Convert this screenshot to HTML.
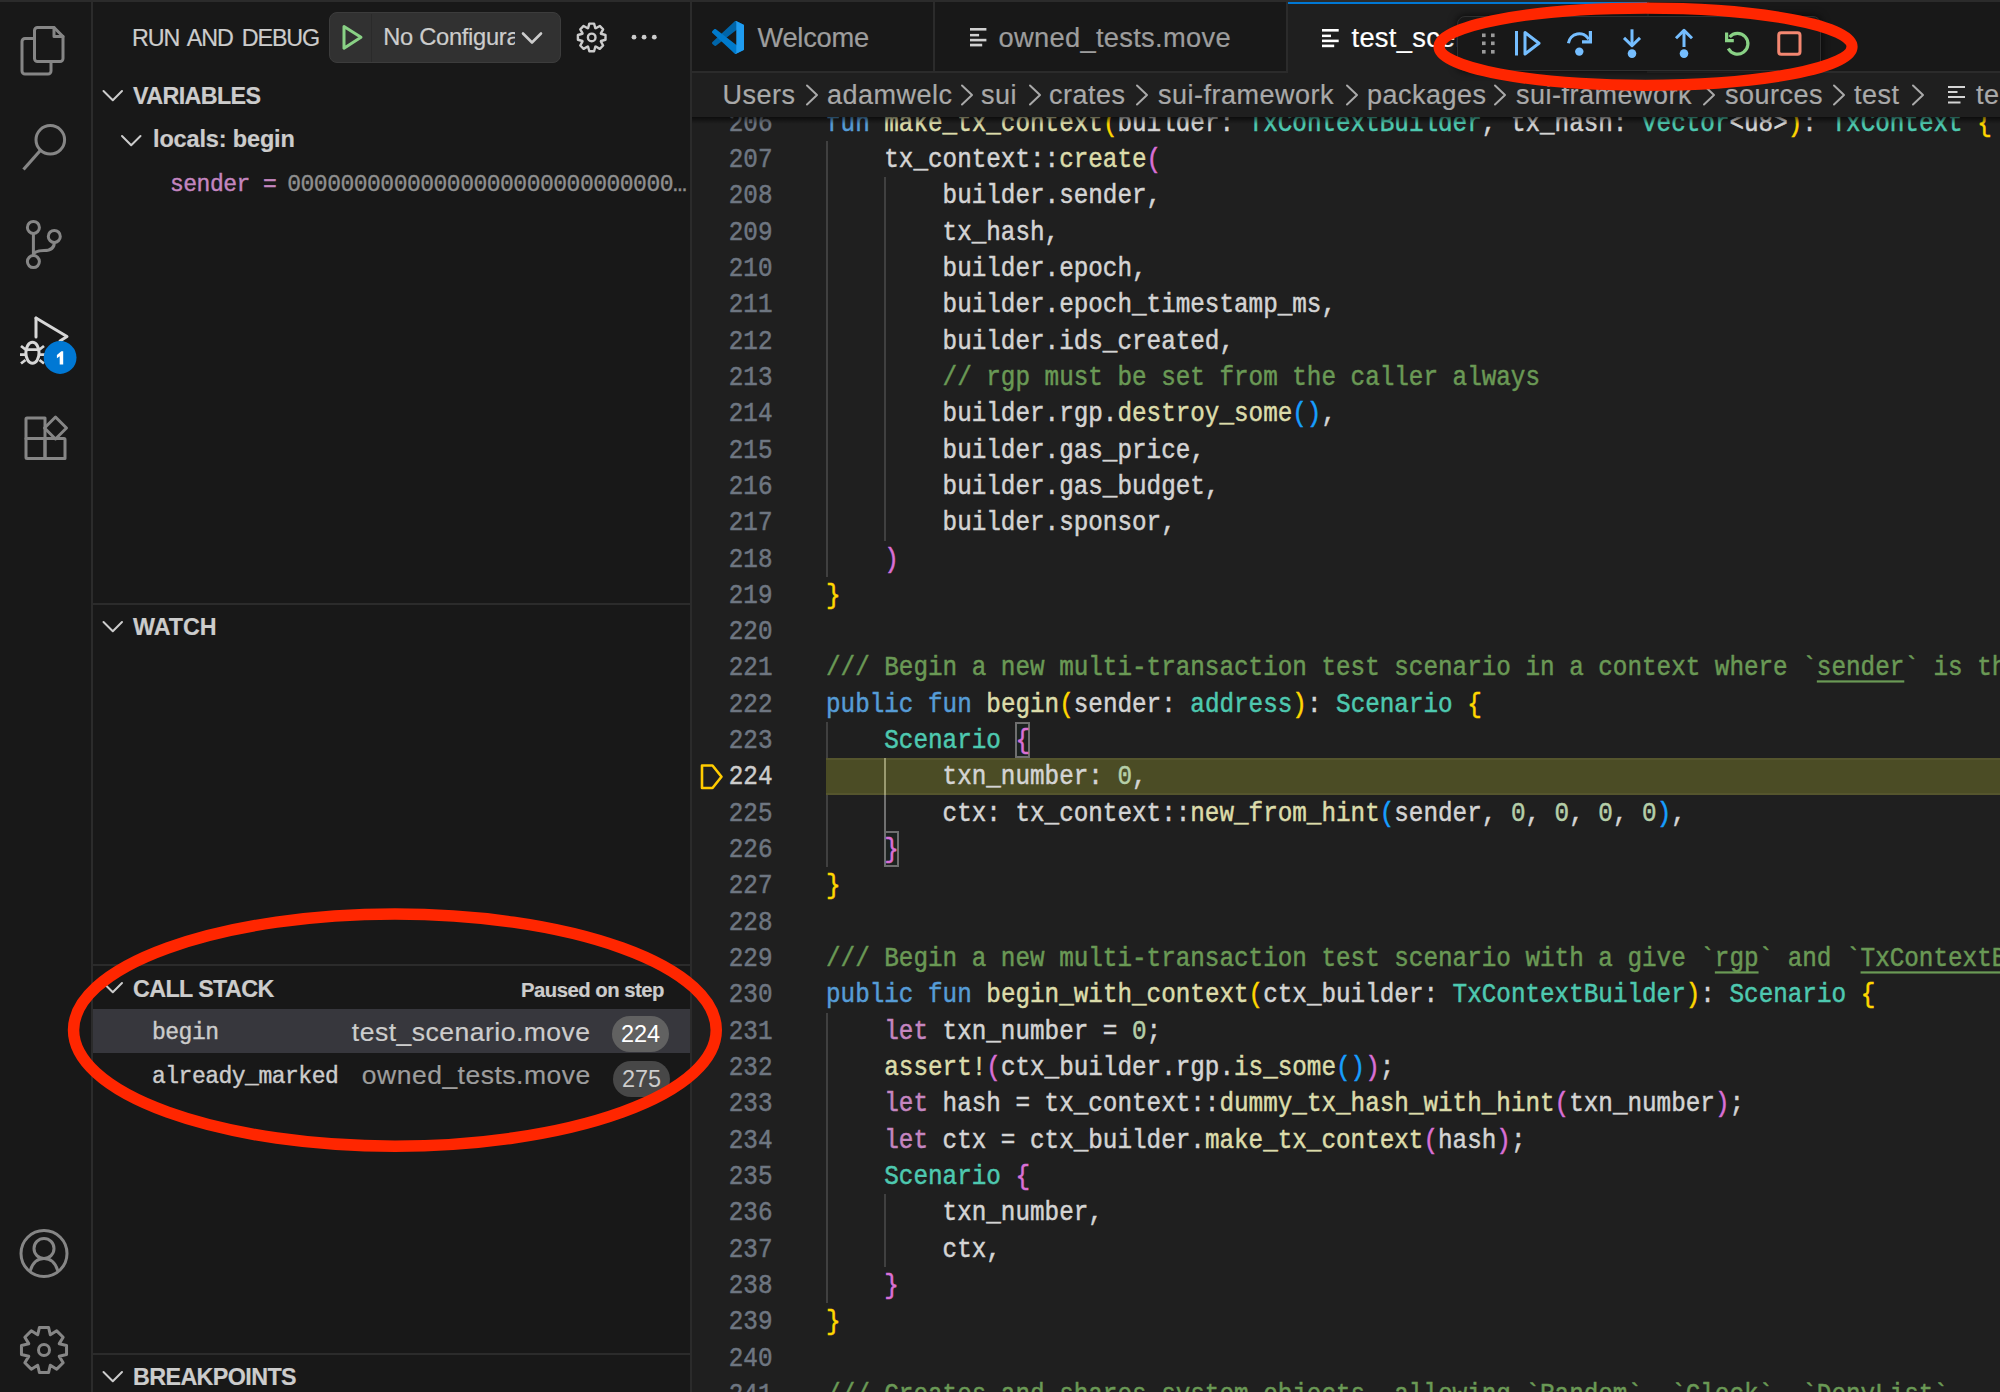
<!DOCTYPE html>
<html><head><meta charset="utf-8"><style>
*{margin:0;padding:0;box-sizing:border-box}
html,body{width:2000px;height:1392px;overflow:hidden;background:#181818;font-family:"Liberation Sans",sans-serif}
.abs{position:absolute}
#topline{position:absolute;left:0;top:0;width:2000px;height:2px;background:#2b2b2b;z-index:5}
#act{position:absolute;left:0;top:0;width:91px;height:1392px;background:#181818}
#actb{position:absolute;left:91px;top:0;width:2px;height:1392px;background:#2b2b2b}
#side{position:absolute;left:93px;top:0;width:597px;height:1392px;background:#181818;color:#cccccc}
#sideb{position:absolute;left:690px;top:0;width:2px;height:1392px;background:#2b2b2b}
#editor{position:absolute;left:692px;top:0;width:1308px;height:1392px;background:#1f1f1f;overflow:hidden}
.ln{position:absolute;left:0;width:80.5px;text-align:right;font-family:"Liberation Mono",monospace;font-size:24.29px;line-height:36.32px;height:36.32px;white-space:pre;transform:translateY(1.15px) scaleY(1.11);-webkit-text-stroke:0.45px currentColor}
.cl{position:absolute;left:134px;font-family:"Liberation Mono",monospace;font-size:24.29px;line-height:36.32px;height:36.32px;white-space:pre;transform:translateY(1.15px) scaleY(1.11);-webkit-text-stroke:0.45px currentColor}
.gd{position:absolute;width:2px}
.u{text-decoration:underline;text-underline-offset:5px;text-decoration-thickness:2px}
.bx{outline:2px solid #6b6b6b;outline-offset:-2px}
.sec{position:absolute;left:0;width:597px;height:2px;background:#2b2b2b}
.hdr{position:absolute;font-weight:700;font-size:23.3px;color:#cccccc;white-space:pre}
.chev{position:absolute}
.t{white-space:pre;line-height:1;-webkit-text-stroke:0.2px currentColor}
.mono{font-family:"Liberation Mono",monospace;white-space:pre;line-height:1;-webkit-text-stroke:0.4px currentColor}
.badge{width:57px;height:36.4px;border-radius:18.2px;font-size:23.5px;line-height:36.4px;text-align:center;font-family:"Liberation Sans",sans-serif}
.bc{top:82px;font-size:27px;letter-spacing:0.5px;color:#a9a9a9}

</style></head><body>
<div id="act">
  <svg class="abs" style="left:0;top:0" width="91" height="1392" viewBox="0 0 91 1392" fill="none" stroke="#868686" stroke-width="3" stroke-linejoin="round" stroke-linecap="round">
    <!-- files -->
    <path d="M34.5 38.5 H25 a3 3 0 0 0 -3 3 V71 a3 3 0 0 0 3 3 H48 a3 3 0 0 0 3 -3 V61.5"/>
    <path d="M37.5 27.5 H54 L63 36.5 V58.5 a3 3 0 0 1 -3 3 H37.5 a3 3 0 0 1 -3 -3 V30.5 a3 3 0 0 1 3 -3 Z"/>
    <path d="M54 27.5 V36.5 H63" stroke-width="3"/>
    <!-- search -->
    <circle cx="50.3" cy="139.8" r="14.3"/>
    <path d="M40.3 150.5 L23.5 169.5" stroke-linecap="butt" stroke-width="3.2"/>
    <!-- source control -->
    <circle cx="33.4" cy="227.4" r="6"/>
    <circle cx="54.3" cy="236.4" r="6"/>
    <circle cx="33.4" cy="261.6" r="6"/>
    <path d="M33.4 233.4 V255.6"/>
    <path d="M54.3 242.4 C54.3 248 50 250.5 44 250.5 C38 250.5 33.4 252 33.4 255.6"/>
    <!-- debug (active) -->
    <g stroke="#d7d7d7">
      <path d="M36 318 L67 336.5 L60 341" />
      <path d="M36 318 V337"/>
      <ellipse cx="32.45" cy="352.8" rx="6.6" ry="10.5" stroke-width="3"/>
      <path d="M26 349.7 H39" stroke-width="2.8"/>
      <path d="M21 346 L25.5 349.5 M20 354.6 H25 M21 363.5 L25.5 360 M44 346 L39.5 349.5 M45 354.6 H40 M44 363.5 L39.5 360" stroke-width="2.8" stroke-linecap="butt"/>
    </g>
    <!-- extensions -->
    <path d="M26 438.5 H45 V458.5 H27 a1 1 0 0 1 -1 -1 Z"/>
    <path d="M45 438.5 H64 a1 1 0 0 1 1 1 V458.5 H45 Z"/>
    <path d="M26 438.5 V419 a1 1 0 0 1 1 -1 H45 V438.5"/>
    <path d="M55.5 417 L66.5 428 L55.5 439 L44.5 428 Z"/>
    <!-- account -->
    <circle cx="44" cy="1253.5" r="23"/>
    <circle cx="44" cy="1248.5" r="10"/>
    <path d="M30.5 1270 C33 1262 38 1258.5 44 1258.5 C50 1258.5 55 1262 57.5 1270"/>
  </svg>
  <svg class="abs" style="left:0;top:330px" width="91" height="50" viewBox="0 330 91 50">
    <circle cx="60.1" cy="357.5" r="16.4" fill="#0078d4"/>
    <path d="M56.9 355 L61.3 351.2 H63.2 V364.6 H59.7 V356.3 L56.9 358.3 Z" fill="#ffffff"/>
  </svg>
  <svg class="abs" style="left:0;top:1300px" width="91" height="92" viewBox="0 1300 91 92" fill="none" stroke="#868686" stroke-width="3" stroke-linejoin="round">
    <path d="M37.73 1334.74 L39.43 1327.46 L48.57 1327.46 L50.27 1334.74 L50.36 1334.77 L56.71 1330.83 L63.17 1337.29 L59.23 1343.64 L59.26 1343.73 L66.54 1345.43 L66.54 1354.57 L59.26 1356.27 L59.23 1356.36 L63.17 1362.71 L56.71 1369.17 L50.36 1365.23 L50.27 1365.26 L48.57 1372.54 L39.43 1372.54 L37.73 1365.26 L37.64 1365.23 L31.29 1369.17 L24.83 1362.71 L28.77 1356.36 L28.74 1356.27 L21.46 1354.57 L21.46 1345.43 L28.74 1343.73 L28.77 1343.64 L24.83 1337.29 L31.29 1330.83 L37.64 1334.77 Z"/>
    <circle cx="44" cy="1350" r="5.5"/>
  </svg>
</div>
<div id="actb"></div>
<div id="side">
  <div class="abs t" style="left:39px;top:26.6px;font-size:23.3px;letter-spacing:-1.1px;word-spacing:3.6px;color:#cccccc">RUN AND DEBUG</div>
  <div class="abs" style="left:236.3px;top:12px;width:232px;height:51px;border-radius:8px;background:#313131;border:1.5px solid #3c3c3c"></div>
  <div class="abs" style="left:277.6px;top:13.5px;width:1.5px;height:48px;background:#2a2a2a"></div>
  <svg class="abs" style="left:236px;top:0" width="360" height="70" viewBox="329 0 360 70" fill="none" stroke-linejoin="round" stroke-linecap="round">
    <path d="M344 26.5 L361 37.3 L344 48.2 Z" stroke="#89d185" stroke-width="3"/>
    <path d="M523 33.5 L532 42.5 L541 33.5" stroke="#cccccc" stroke-width="2.6"/>
    <path d="M588.08 28.08 L589.33 23.60 L594.07 23.60 L595.32 28.08 L595.74 28.25 L599.78 25.97 L603.13 29.32 L600.85 33.36 L601.02 33.78 L605.50 35.03 L605.50 39.77 L601.02 41.02 L600.85 41.44 L603.13 45.48 L599.78 48.83 L595.74 46.55 L595.32 46.72 L594.07 51.20 L589.33 51.20 L588.08 46.72 L587.66 46.55 L583.62 48.83 L580.27 45.48 L582.55 41.44 L582.38 41.02 L577.90 39.77 L577.90 35.03 L582.38 33.78 L582.55 33.36 L580.27 29.32 L583.62 25.97 L587.66 28.25 Z" stroke="#cccccc" stroke-width="2.4"/>
    <circle cx="591.7" cy="37.4" r="3.8" stroke="#cccccc" stroke-width="2.4"/>
    <circle cx="634" cy="37.2" r="2.4" fill="#cccccc" stroke="none"/>
    <circle cx="644.1" cy="37.2" r="2.4" fill="#cccccc" stroke="none"/>
    <circle cx="654.3" cy="37.2" r="2.4" fill="#cccccc" stroke="none"/>
  </svg>
  <div class="abs t" style="left:290.3px;top:25.9px;width:132px;height:30px;overflow:hidden;font-size:23.7px;letter-spacing:-0.3px;color:#cccccc">No Configuration</div>

  <!-- VARIABLES -->
  <svg class="abs" style="left:0;top:0" width="597" height="1392" viewBox="93 0 597 1392" fill="none" stroke="#cccccc" stroke-width="2" stroke-linecap="round" stroke-linejoin="round">
    <path d="M103.5 91 L112.8 100.3 L122 91"/>
    <path d="M122 136 L131.2 145.3 L140.5 136"/>
    <path d="M103.5 622 L112.8 631.3 L122 622"/>
    <path d="M103.5 983 L112.8 992.3 L122 983"/>
    <path d="M103.5 1372 L112.8 1381.3 L122 1372"/>
  </svg>
  <div class="abs t hdr" style="left:40px;top:84.8px;letter-spacing:-0.6px">VARIABLES</div>
  <div class="abs t hdr" style="left:60px;top:128px;font-size:23.5px;letter-spacing:-0.15px">locals: begin</div>
  <div class="abs mono" style="left:77px;top:174.3px;font-size:23px;letter-spacing:-0.5px;color:#c586c0">sender = <span style="color:#8e8e8e;margin-left:-2.5px">00000000000000000000000000000…</span></div>

  <div class="sec" style="top:603px"></div>
  <div class="abs t hdr" style="left:40px;top:615.6px;letter-spacing:0px">WATCH</div>

  <div class="sec" style="top:964px"></div>
  <div class="abs t hdr" style="left:40px;top:977.9px;letter-spacing:-0.6px">CALL STACK</div>
  <div class="abs t" style="left:428px;top:979.8px;font-weight:700;font-size:20.3px;letter-spacing:-0.5px;color:#cccccc">Paused on step</div>
  <div class="abs" style="left:0;top:1009px;width:597px;height:44px;background:#37373d"></div>
  <div class="abs mono" style="left:59px;top:1022.1px;font-size:23px;letter-spacing:-0.5px;color:#cccccc">begin</div>
  <div class="abs t" style="left:258.8px;top:1018.5px;font-size:26.5px;letter-spacing:0.5px;color:#cccccc">test_scenario.move</div>
  <div class="abs badge" style="left:519.1px;top:1015.5px;background:#616161;color:#ffffff">224</div>
  <div class="abs mono" style="left:59px;top:1066.1px;font-size:23px;letter-spacing:-0.5px;color:#cccccc">already_marked</div>
  <div class="abs t" style="left:268.8px;top:1062.2px;font-size:26.5px;letter-spacing:0.5px;color:#9d9d9d">owned_tests.move</div>
  <div class="abs badge" style="left:520px;top:1060.7px;background:#474747;color:#cccccc">275</div>

  <div class="sec" style="top:1353px"></div>
  <div class="abs t hdr" style="left:40px;top:1365.9px;letter-spacing:-0.6px">BREAKPOINTS</div>
</div>
<div id="sideb"></div><div id="topline"></div>
<div id="editor">
  <div id="code" class="abs" style="left:0;top:0;width:1308px;height:1392px;overflow:hidden">
    <div class="gd" style="left:134px;top:141.00px;height:435.84px;background:#404040"></div>
<div class="gd" style="left:192px;top:177.32px;height:363.20px;background:#404040"></div>
<div class="gd" style="left:134px;top:722.12px;height:145.28px;background:#404040"></div>
<div class="gd" style="left:134px;top:1012.68px;height:290.56px;background:#404040"></div>
<div class="gd" style="left:192px;top:1194.28px;height:72.64px;background:#404040"></div>
<div class="abs" style="left:134px;top:758.44px;width:1200px;height:36.32px;background:#4b4c25;box-shadow:inset 0 2px 0 #55552d,inset 0 -2px 0 #55552d"></div>
<div class="gd" style="left:192px;top:758.44px;height:36.32px;background:#9a9a70"></div>
<div class="gd" style="left:192px;top:794.76px;height:36.32px;background:#707070"></div>
<div class="abs" style="left:323.49px;top:722.12px;width:14.58px;height:36.32px;border:2px solid #6f6f6f;background:#1c2220"></div>
<div class="abs" style="left:192.30px;top:831.08px;width:14.58px;height:36.32px;border:2px solid #6f6f6f;background:#1c2220"></div>
    <div class="ln" style="top:104.68px;color:#6e7681">206</div>
<div class="cl" style="top:104.68px"><span style="color:#569cd6">fun</span><span style="color:#d4d4d4"> </span><span style="color:#dcdcaa">make_tx_context</span><span style="color:#ffd700">(</span><span style="color:#d4d4d4">builder: </span><span style="color:#4ec9b0">TxContextBuilder</span><span style="color:#d4d4d4">, tx_hash: </span><span style="color:#4ec9b0">vector</span><span style="color:#d4d4d4">&lt;u8&gt;</span><span style="color:#ffd700">)</span><span style="color:#d4d4d4">: </span><span style="color:#4ec9b0">TxContext</span><span style="color:#d4d4d4"> </span><span style="color:#ffd700">{</span></div>
<div class="ln" style="top:141.00px;color:#6e7681">207</div>
<div class="cl" style="top:141.00px"><span style="color:#d4d4d4">    tx_context::</span><span style="color:#dcdcaa">create</span><span style="color:#da70d6">(</span></div>
<div class="ln" style="top:177.32px;color:#6e7681">208</div>
<div class="cl" style="top:177.32px"><span style="color:#d4d4d4">        builder.sender,</span></div>
<div class="ln" style="top:213.64px;color:#6e7681">209</div>
<div class="cl" style="top:213.64px"><span style="color:#d4d4d4">        tx_hash,</span></div>
<div class="ln" style="top:249.96px;color:#6e7681">210</div>
<div class="cl" style="top:249.96px"><span style="color:#d4d4d4">        builder.epoch,</span></div>
<div class="ln" style="top:286.28px;color:#6e7681">211</div>
<div class="cl" style="top:286.28px"><span style="color:#d4d4d4">        builder.epoch_timestamp_ms,</span></div>
<div class="ln" style="top:322.60px;color:#6e7681">212</div>
<div class="cl" style="top:322.60px"><span style="color:#d4d4d4">        builder.ids_created,</span></div>
<div class="ln" style="top:358.92px;color:#6e7681">213</div>
<div class="cl" style="top:358.92px"><span style="color:#6a9955">        // rgp must be set from the caller always</span></div>
<div class="ln" style="top:395.24px;color:#6e7681">214</div>
<div class="cl" style="top:395.24px"><span style="color:#d4d4d4">        builder.rgp.</span><span style="color:#dcdcaa">destroy_some</span><span style="color:#179fff">()</span><span style="color:#d4d4d4">,</span></div>
<div class="ln" style="top:431.56px;color:#6e7681">215</div>
<div class="cl" style="top:431.56px"><span style="color:#d4d4d4">        builder.gas_price,</span></div>
<div class="ln" style="top:467.88px;color:#6e7681">216</div>
<div class="cl" style="top:467.88px"><span style="color:#d4d4d4">        builder.gas_budget,</span></div>
<div class="ln" style="top:504.20px;color:#6e7681">217</div>
<div class="cl" style="top:504.20px"><span style="color:#d4d4d4">        builder.sponsor,</span></div>
<div class="ln" style="top:540.52px;color:#6e7681">218</div>
<div class="cl" style="top:540.52px"><span style="color:#d4d4d4">    </span><span style="color:#da70d6">)</span></div>
<div class="ln" style="top:576.84px;color:#6e7681">219</div>
<div class="cl" style="top:576.84px"><span style="color:#ffd700">}</span></div>
<div class="ln" style="top:613.16px;color:#6e7681">220</div>
<div class="ln" style="top:649.48px;color:#6e7681">221</div>
<div class="cl" style="top:649.48px"><span style="color:#6a9955">/// Begin a new multi-transaction test scenario in a context where `</span><span class="u" style="color:#6a9955">sender</span><span style="color:#6a9955">` is the</span></div>
<div class="ln" style="top:685.80px;color:#6e7681">222</div>
<div class="cl" style="top:685.80px"><span style="color:#569cd6">public</span><span style="color:#d4d4d4"> </span><span style="color:#569cd6">fun</span><span style="color:#d4d4d4"> </span><span style="color:#dcdcaa">begin</span><span style="color:#ffd700">(</span><span style="color:#d4d4d4">sender: </span><span style="color:#4ec9b0">address</span><span style="color:#ffd700">)</span><span style="color:#d4d4d4">: </span><span style="color:#4ec9b0">Scenario</span><span style="color:#d4d4d4"> </span><span style="color:#ffd700">{</span></div>
<div class="ln" style="top:722.12px;color:#6e7681">223</div>
<div class="cl" style="top:722.12px"><span style="color:#d4d4d4">    </span><span style="color:#4ec9b0">Scenario</span><span style="color:#d4d4d4"> </span><span style="color:#da70d6">{</span></div>
<div class="ln" style="top:758.44px;color:#cccccc">224</div>
<div class="cl" style="top:758.44px"><span style="color:#d4d4d4">        txn_number: </span><span style="color:#b5cea8">0</span><span style="color:#d4d4d4">,</span></div>
<div class="ln" style="top:794.76px;color:#6e7681">225</div>
<div class="cl" style="top:794.76px"><span style="color:#d4d4d4">        ctx: tx_context::</span><span style="color:#dcdcaa">new_from_hint</span><span style="color:#179fff">(</span><span style="color:#d4d4d4">sender, </span><span style="color:#b5cea8">0</span><span style="color:#d4d4d4">, </span><span style="color:#b5cea8">0</span><span style="color:#d4d4d4">, </span><span style="color:#b5cea8">0</span><span style="color:#d4d4d4">, </span><span style="color:#b5cea8">0</span><span style="color:#179fff">)</span><span style="color:#d4d4d4">,</span></div>
<div class="ln" style="top:831.08px;color:#6e7681">226</div>
<div class="cl" style="top:831.08px"><span style="color:#d4d4d4">    </span><span style="color:#da70d6">}</span></div>
<div class="ln" style="top:867.40px;color:#6e7681">227</div>
<div class="cl" style="top:867.40px"><span style="color:#ffd700">}</span></div>
<div class="ln" style="top:903.72px;color:#6e7681">228</div>
<div class="ln" style="top:940.04px;color:#6e7681">229</div>
<div class="cl" style="top:940.04px"><span style="color:#6a9955">/// Begin a new multi-transaction test scenario with a give `</span><span class="u" style="color:#6a9955">rgp</span><span style="color:#6a9955">` and `</span><span class="u" style="color:#6a9955">TxContextBuilder</span><span style="color:#6a9955">`</span></div>
<div class="ln" style="top:976.36px;color:#6e7681">230</div>
<div class="cl" style="top:976.36px"><span style="color:#569cd6">public</span><span style="color:#d4d4d4"> </span><span style="color:#569cd6">fun</span><span style="color:#d4d4d4"> </span><span style="color:#dcdcaa">begin_with_context</span><span style="color:#ffd700">(</span><span style="color:#d4d4d4">ctx_builder: </span><span style="color:#4ec9b0">TxContextBuilder</span><span style="color:#ffd700">)</span><span style="color:#d4d4d4">: </span><span style="color:#4ec9b0">Scenario</span><span style="color:#d4d4d4"> </span><span style="color:#ffd700">{</span></div>
<div class="ln" style="top:1012.68px;color:#6e7681">231</div>
<div class="cl" style="top:1012.68px"><span style="color:#d4d4d4">    </span><span style="color:#c586c0">let</span><span style="color:#d4d4d4"> txn_number = </span><span style="color:#b5cea8">0</span><span style="color:#d4d4d4">;</span></div>
<div class="ln" style="top:1049.00px;color:#6e7681">232</div>
<div class="cl" style="top:1049.00px"><span style="color:#d4d4d4">    </span><span style="color:#dcdcaa">assert!</span><span style="color:#da70d6">(</span><span style="color:#d4d4d4">ctx_builder.rgp.</span><span style="color:#dcdcaa">is_some</span><span style="color:#179fff">()</span><span style="color:#da70d6">)</span><span style="color:#d4d4d4">;</span></div>
<div class="ln" style="top:1085.32px;color:#6e7681">233</div>
<div class="cl" style="top:1085.32px"><span style="color:#d4d4d4">    </span><span style="color:#c586c0">let</span><span style="color:#d4d4d4"> hash = tx_context::</span><span style="color:#dcdcaa">dummy_tx_hash_with_hint</span><span style="color:#da70d6">(</span><span style="color:#d4d4d4">txn_number</span><span style="color:#da70d6">)</span><span style="color:#d4d4d4">;</span></div>
<div class="ln" style="top:1121.64px;color:#6e7681">234</div>
<div class="cl" style="top:1121.64px"><span style="color:#d4d4d4">    </span><span style="color:#c586c0">let</span><span style="color:#d4d4d4"> ctx = ctx_builder.</span><span style="color:#dcdcaa">make_tx_context</span><span style="color:#da70d6">(</span><span style="color:#d4d4d4">hash</span><span style="color:#da70d6">)</span><span style="color:#d4d4d4">;</span></div>
<div class="ln" style="top:1157.96px;color:#6e7681">235</div>
<div class="cl" style="top:1157.96px"><span style="color:#d4d4d4">    </span><span style="color:#4ec9b0">Scenario</span><span style="color:#d4d4d4"> </span><span style="color:#da70d6">{</span></div>
<div class="ln" style="top:1194.28px;color:#6e7681">236</div>
<div class="cl" style="top:1194.28px"><span style="color:#d4d4d4">        txn_number,</span></div>
<div class="ln" style="top:1230.60px;color:#6e7681">237</div>
<div class="cl" style="top:1230.60px"><span style="color:#d4d4d4">        ctx,</span></div>
<div class="ln" style="top:1266.92px;color:#6e7681">238</div>
<div class="cl" style="top:1266.92px"><span style="color:#d4d4d4">    </span><span style="color:#da70d6">}</span></div>
<div class="ln" style="top:1303.24px;color:#6e7681">239</div>
<div class="cl" style="top:1303.24px"><span style="color:#ffd700">}</span></div>
<div class="ln" style="top:1339.56px;color:#6e7681">240</div>
<div class="ln" style="top:1375.88px;color:#6e7681">241</div>
<div class="cl" style="top:1375.88px"><span style="color:#6a9955">/// Creates and shares system objects, allowing `Random`, `Clock`, `DenyList`</span></div>
    <svg class="abs" style="left:0;top:0" width="60" height="1392" viewBox="692 0 60 1392" fill="none">
      <path d="M702 765.5 H712.5 L721.5 776.8 L712.5 788 H702 Z" stroke="#ffcc00" stroke-width="2.6" stroke-linejoin="round"/>
    </svg>
  </div>
  <!-- scroll shadow -->
  <div class="abs" style="left:0;top:116px;width:1308px;height:8px;background:linear-gradient(#000000aa,#00000000)"></div>
  <!-- tab bar -->
  <div id="tabs" class="abs" style="left:0;top:0;width:1308px;height:73px;background:#181818"></div>
  <div class="abs" style="left:0;top:71px;width:1308px;height:2px;background:#2b2b2b"></div>
  <div class="abs" style="left:241px;top:2px;width:2px;height:69px;background:#2b2b2b"></div>
  <div class="abs" style="left:594px;top:2px;width:2px;height:69px;background:#2b2b2b"></div>
  <div class="abs" style="left:955px;top:2px;width:2px;height:69px;background:#2b2b2b"></div>
  <div class="abs" style="left:596px;top:2px;width:359px;height:71px;background:#1f1f1f"></div>
  <div class="abs" style="left:596px;top:2px;width:359px;height:2px;background:#0078d4"></div>
  <!-- tab 1 welcome -->
  <svg class="abs" style="left:19.7px;top:20.8px" width="32.4" height="32.9" viewBox="0 0 100 100" preserveAspectRatio="none">
    <path d="M96.46 10.8 L75.86 .88 C73.48 -.27 70.63 .21 68.76 2.08 L1.33 63.58 C-.49 65.24 -.48 68.1 1.33 69.75 L6.84 74.76 C8.32 76.11 10.55 76.21 12.15 74.99 L93.36 13.37 C96.08 11.3 100 13.25 100 16.68 V16.44 C100 14.03 98.62 11.84 96.46 10.8Z" fill="#0065a9"/>
    <path d="M96.46 89.2 L75.86 99.12 C73.48 100.27 70.63 99.79 68.76 97.92 L1.33 36.42 C-.49 34.76 -.48 31.9 1.33 30.25 L6.84 25.24 C8.32 23.89 10.55 23.79 12.15 25.01 L93.36 86.63 C96.08 88.7 100 86.75 100 83.32 V83.56 C100 85.97 98.62 88.16 96.46 89.2Z" fill="#007acc"/>
    <path d="M75.86 99.13 C73.48 100.27 70.63 99.79 68.76 97.92 C71.07 100.23 75 98.6 75 95.33 V4.67 C75 1.4 71.07 -.23 68.76 2.08 C70.63 .21 73.48 -.27 75.86 .87 L96.46 10.8 C98.62 11.84 100 14.03 100 16.44 V83.56 C100 85.97 98.62 88.16 96.46 89.2Z" fill="#1f9cf0"/>
  </svg>
  <div class="abs t" style="left:65.4px;top:23.7px;font-size:27.3px;letter-spacing:-0.25px;color:#9d9d9d">Welcome</div>
  <!-- tab 2 -->
  <svg class="abs" style="left:277.8px;top:27.9px" width="18" height="20" viewBox="0 0 18 20" fill="#d0d0d0">
    <rect x="0" y="0" width="16.4" height="2.6"/><rect x="0" y="5.9" width="9.1" height="2.5"/><rect x="0" y="10.8" width="16.4" height="2.6"/><rect x="0" y="15.7" width="12.2" height="2.7"/>
  </svg>
  <div class="abs t" style="left:306.5px;top:23.9px;font-size:27.3px;letter-spacing:0.3px;color:#9d9d9d">owned_tests.move</div>
  <!-- tab 3 active -->
  <svg class="abs" style="left:630px;top:28.5px" width="18" height="20" viewBox="0 0 18 20" fill="#ffffff">
    <rect x="0" y="0" width="16.7" height="2.6"/><rect x="0" y="5.6" width="9" height="2.5"/><rect x="0" y="10.6" width="16.7" height="2.6"/><rect x="0" y="15.6" width="12.2" height="2.6"/>
  </svg>
  <div class="abs t" style="left:659.5px;top:23.9px;font-size:27.3px;letter-spacing:0.3px;color:#ffffff">test_scenario.move</div>

  <!-- breadcrumbs -->
  <div id="bc" class="abs" style="left:0;top:73px;width:1308px;height:43.5px;background:#1f1f1f"></div>
  <div class="abs t bc" style="left:30.5px">Users</div>
  <div class="abs t bc" style="left:135px">adamwelc</div>
  <div class="abs t bc" style="left:289px">sui</div>
  <div class="abs t bc" style="left:357px">crates</div>
  <div class="abs t bc" style="left:466px">sui-framework</div>
  <div class="abs t bc" style="left:675px">packages</div>
  <div class="abs t bc" style="left:824px">sui-framework</div>
  <div class="abs t bc" style="left:1033px">sources</div>
  <div class="abs t bc" style="left:1162px">test</div>
  <div class="abs t bc" style="left:1284px">te</div>
  <svg class="abs" style="left:0;top:73px" width="1308" height="44" viewBox="692 73 1308 44" fill="none" stroke="#a9a9a9" stroke-width="2" stroke-linecap="round" stroke-linejoin="round">
    <path d="M807 85.5 L817 95 L807 104.5"/>
    <path d="M962 85.5 L972 95 L962 104.5"/>
    <path d="M1030 85.5 L1040 95 L1030 104.5"/>
    <path d="M1137 85.5 L1147 95 L1137 104.5"/>
    <path d="M1347 85.5 L1357 95 L1347 104.5"/>
    <path d="M1495 85.5 L1505 95 L1495 104.5"/>
    <path d="M1704 85.5 L1714 95 L1704 104.5"/>
    <path d="M1834 85.5 L1844 95 L1834 104.5"/>
    <path d="M1913 85.5 L1923 95 L1913 104.5"/>
    <g fill="#d4d4d4" stroke="none">
      <rect x="1948" y="86" width="17" height="2"/><rect x="1948" y="91" width="9.5" height="2"/><rect x="1948" y="96" width="17" height="2"/><rect x="1948" y="101.5" width="12.5" height="2"/>
    </g>
  </svg>

  <!-- debug toolbar -->
  <div class="abs" style="left:765px;top:16px;width:364px;height:55px;border-radius:8px;background:#181818;border:1.5px solid #2f2f2f;box-shadow:0 0 8px #000000cc"></div>
  <svg class="abs" style="left:765px;top:16px" width="364" height="55" viewBox="1457 16 364 55" fill="none" stroke-linecap="butt" stroke-linejoin="round">
    <g fill="#9a9a9a">
      <rect x="1482" y="33.5" width="3.6" height="3.6"/><rect x="1491" y="33.5" width="3.6" height="3.6"/>
      <rect x="1482" y="41.5" width="3.6" height="3.6"/><rect x="1491" y="41.5" width="3.6" height="3.6"/>
      <rect x="1482" y="50" width="3.6" height="3.6"/><rect x="1491" y="50" width="3.6" height="3.6"/>
    </g>
    <g stroke="#75beff" stroke-width="3">
      <path d="M1516.5 31 V55.5"/>
      <path d="M1525 32.5 L1539 43.3 L1525 54 Z"/>
      <path d="M1568.4 43.2 A11 11 0 0 1 1588.8 39.2" />
      <path d="M1590.4 31 V41.9 H1582" stroke-linejoin="miter" stroke-width="3.2"/>
      <path d="M1632 29.3 V45.5"/>
      <path d="M1624 37.9 L1632 45.7 L1640 37.9"/>
      <path d="M1684 30.2 V47"/>
      <path d="M1676 38.3 L1684 30.4 L1692 38.3"/>
    </g>
    <g fill="#75beff">
      <circle cx="1579.3" cy="51.6" r="4.2"/>
      <circle cx="1632" cy="53.6" r="4.3"/>
      <circle cx="1684" cy="53.6" r="4.3"/>
    </g>
    <path d="M1728.3 48.6 A10.4 10.4 0 1 0 1729.6 37" stroke="#89d185" stroke-width="3.2"/>
    <path d="M1726.6 32.5 V40.6 H1733.8" stroke="#89d185" stroke-width="3.2" stroke-linejoin="miter"/>
    <rect x="1778.75" y="32.75" width="21.25" height="21.5" rx="2.5" stroke="#f48771" stroke-width="3"/>
  </svg>
</div>
<!-- annotations -->
<svg class="abs" style="left:0;top:0;z-index:20" width="2000" height="1392" viewBox="0 0 2000 1392" fill="none" stroke="#ff2600">
  <ellipse cx="1645.55" cy="46.7" rx="206.5" ry="38.6" stroke-width="11.2"/>
  <ellipse cx="394.9" cy="1030.1" rx="321.35" ry="116.1" stroke-width="11.5"/>
</svg>

</body></html>
